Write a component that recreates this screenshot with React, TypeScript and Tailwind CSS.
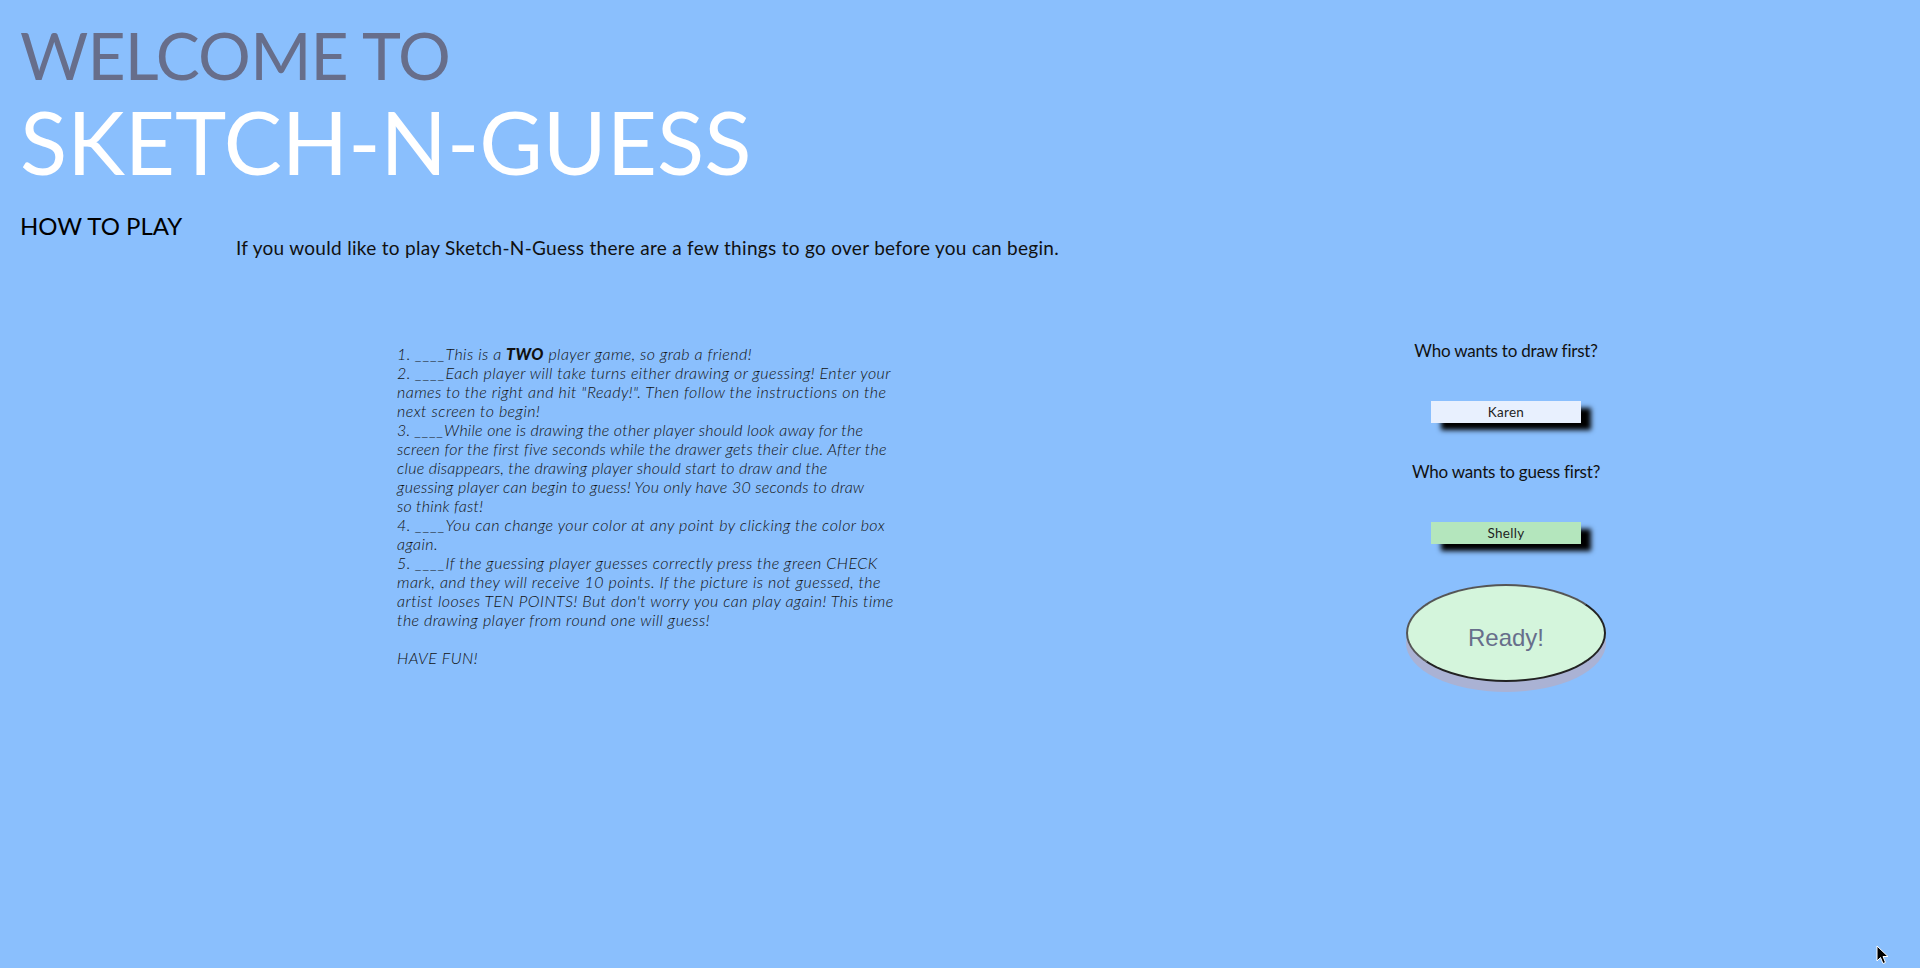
import React from 'react';

const font = { fontFamily: 'Lato, "Open Sans", sans-serif' };

function NameInput({ value, bg }: { value: string; bg: string }) {
  return (
    <input
      readOnly
      value={value}
      className={`w-[150px] h-[22px] border-0 outline-none text-center text-[13.5px] tracking-[0.3px] text-[#1f1f1f] shadow-[10px_7px_5px_#000] ${bg}`}
      style={font}
    />
  );
}

export default function App() {
  return (
    <div className="relative min-h-[968px] w-full overflow-hidden bg-[#8abffd]" style={font}>
      <div className="pl-[20px]">
        <h1 className="mt-[22px] text-[66px] leading-[66px] font-normal tracking-[-0.8px] text-[#676e8b]">WELCOME TO</h1>
        <h1 className="mt-[10px] text-[87px] leading-[87px] font-normal text-white">SKETCH-N-GUESS</h1>
        <h3 className="mt-[29px] text-[24px] leading-[24px] text-black">HOW TO PLAY</h3>
        <p className="pl-[216px] text-[19px] leading-[19px] tracking-[0.3px] text-[#111]">
          If you would like to play Sketch-N-Guess there are a few things to go over before you can begin.
        </p>
      </div>

      {/* instructions + player setup */}
      <div className="mt-[84px] flex items-start pl-[397px]">
        <div className="mt-[3px] w-[500px] text-[16px] leading-[19px] font-light italic tracking-[0.45px] text-[#111]">
          <p>1. ____This is a <b className="font-black">TWO</b> player game, so grab a friend!</p>
          <p>
            2. ____Each player will take turns either drawing or guessing! Enter your names to the right and hit
            "Ready!". Then follow the instructions on the next screen to begin!
          </p>
          <p className="whitespace-nowrap tracking-[0.25px]">
            3. ____While one is drawing the other player should look away for the
            <br />
            screen for the first five seconds while the drawer gets their clue. After the
            <br />
            clue disappears, the drawing player should start to draw and the
            <br />
            guessing player can begin to guess! You only have 30 seconds to draw
            <br />
            so think fast!
          </p>
          <p>4. ____You can change your color at any point by clicking the color box again.</p>
          <p>
            5. ____If the guessing player guesses correctly press the green CHECK mark, and they will receive 10
            points. If the picture is not guessed, the artist looses TEN POINTS! But don't worry you can play again!
            This time the drawing player from round one will guess!
          </p>
          <p className="mt-[19px]">HAVE FUN!</p>
        </div>

        <div className="ml-[459px] flex w-[300px] flex-col items-center">
          <p className="text-[17px] leading-[20px] tracking-[-0.2px] text-[#111]">Who wants to draw first?</p>
          <div className="mt-[38px]">
            <NameInput value="Karen" bg="bg-[#e8f0fe]" />
          </div>
          <p className="mt-[39px] text-[17px] leading-[20px] tracking-[-0.2px] text-[#111]">Who wants to guess first?</p>
          <div className="mt-[38px]">
            <NameInput value="Shelly" bg="bg-[#b4e6bd]" />
          </div>
          <button
            className="mt-[40px] flex h-[98px] w-[200px] items-center justify-center rounded-[50%] border-2 border-[#555] border-b-[#222] border-r-[#222] bg-[#d4f5dc] pt-[10px] text-[24px] text-[#676e8b] shadow-[0_10px_0_#aab2d4]"
            style={{ fontFamily: '"Liberation Sans", Arial, sans-serif' }}
          >
            Ready!
          </button>
        </div>
      </div>

      {/* mouse pointer */}
      <svg className="absolute left-[1876px] top-[945px]" width="13" height="20" viewBox="0 0 13 20">
        <path d="M1 1 L1 16 L4.5 12.5 L7 18.5 L9.5 17.5 L7 11.5 L12 11.5 Z" fill="#000" stroke="#fff" strokeWidth="1" />
      </svg>
    </div>
  );
}
